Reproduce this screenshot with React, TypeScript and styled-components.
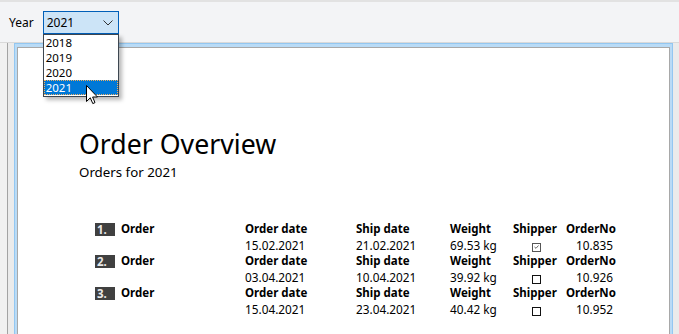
import React from "react";
import styled, { createGlobalStyle } from "styled-components";

const GlobalStyle = createGlobalStyle`
  html, body { margin: 0; padding: 0; }
  body {
    background: #ebebeb;
    font-family: "Noto Sans", "Open Sans", sans-serif;
    color: #000;
    overflow: hidden;
  }
`;

const Screen = styled.div`
  position: relative;
  width: 679px;
  height: 334px;
  overflow: hidden;
  display: flex;
  flex-direction: column;
`;

const Toolbar = styled.div`
  height: 40px;
  flex: none;
  background: #f3f4f6;
  border-top: 2px solid #e2e2e2;
  border-bottom: 1px solid #d9d9d9;
  display: flex;
  align-items: center;
  padding-left: 9px;
  gap: 9px;
  font-size: 12px;
`;

const Label = styled.span`
  font-size: 12px;
`;

const SelectWrap = styled.div`
  position: relative;
  width: 76px;
  height: 23px;
  margin-top: 1px;
`;

const SelectBox = styled.div`
  box-sizing: border-box;
  width: 100%;
  height: 100%;
  background: #cce4f7;
  border: 1px solid #005fb8;
  display: flex;
  align-items: center;
  justify-content: space-between;
  padding: 0 5px 0 3px;
  font-size: 12px;
`;

const List = styled.div`
  position: absolute;
  left: 0;
  top: 23px;
  width: 76px;
  box-sizing: border-box;
  background: #fff;
  border: 1px solid #3d4650;
  box-shadow: 3px 3px 4px rgba(0, 0, 0, 0.28);
  padding: 0 0 1px;
  z-index: 5;
`;

const Item = styled.div<{ $selected?: boolean }>`
  height: 15px;
  line-height: 15px;
  font-size: 11.5px;
  padding-left: 2px;
  box-sizing: border-box;
  overflow: hidden;
  background: ${(p) => (p.$selected ? "#0078d7" : "transparent")};
  color: ${(p) => (p.$selected ? "#fff" : "#000")};
  outline: ${(p) => (p.$selected ? "1px dotted #f0b060" : "none")};
  outline-offset: -1px;
`;

const Workspace = styled.div`
  flex: 1;
  display: flex;
  min-height: 0;
`;

const SideStrip = styled.div`
  width: 7px;
  background: #f1f1f1;
  border-right: 1px solid #a3a3a3;
`;

const FrameArea = styled.div`
  flex: 1;
  padding: 0 6px 0 6px;
  display: flex;
`;

const Frame = styled.div`
  flex: 1;
  border: 1px solid #93c7f1;
  border-bottom: none;
  padding: 3px 2px 0 2px;
  background: #b9dbf6;
  display: flex;
`;

const Page = styled.div`
  flex: 1;
  background: #fff;
  border: 1px solid #a8a8a8;
  border-bottom: none;
  padding: 80px 0 0 61px;
`;

const Title = styled.h1`
  margin: 0;
  font-weight: 400;
  font-size: 26.7px;
  line-height: 32px;
`;

const Subtitle = styled.div`
  font-size: 13.3px;
  line-height: 16px;
  margin-top: 4px;
`;

const Table = styled.div`
  margin: 41px 0 0 16px;
  display: grid;
  grid-template-columns: 26px 124px 111px 94px 63px 53px 47px;
  grid-auto-rows: 16px;
  font-size: 11.5px;
  line-height: 16px;
`;

const Badge = styled.div`
  width: 20px;
  height: 13px;
  margin-top: 2px;
  background: #404040;
  color: #e8e8e8;
  font-weight: 700;
  font-size: 11.5px;
  line-height: 13px;
  padding-left: 2px;
  box-sizing: border-box;
`;

const Head = styled.div<{ $right?: boolean }>`
  font-weight: 700;
  white-space: nowrap;
  text-align: ${(p) => (p.$right ? "right" : "left")};
`;

const Cell = styled.div<{ $right?: boolean; $center?: boolean }>`
  white-space: nowrap;
  font-size: 11.8px;
  text-align: ${(p) => (p.$right ? "right" : p.$center ? "center" : "left")};
  display: ${(p) => (p.$center ? "flex" : "block")};
  justify-content: center;
  align-items: center;
`;

const Box = styled.div<{ $checked?: boolean }>`
  width: 9px;
  height: 9px;
  box-sizing: border-box;
  border: 1px solid ${(p) => (p.$checked ? "#555" : "#111")};
  margin-top: 4px;
  margin-right: 6px;
  display: flex;
  align-items: center;
  justify-content: center;
`;

const Cursor = styled.svg`
  position: absolute;
  left: 86px;
  top: 85px;
  z-index: 10;
`;

const orders = [
  { n: "1.", od: "15.02.2021", sd: "21.02.2021", w: "69.53 kg", s: true, no: "10.835" },
  { n: "2.", od: "03.04.2021", sd: "10.04.2021", w: "39.92 kg", s: false, no: "10.926" },
  { n: "3.", od: "15.04.2021", sd: "23.04.2021", w: "40.42 kg", s: false, no: "10.952" },
];

export default function App() {
  return (
    <>
      <GlobalStyle />
      <Screen>
        <Toolbar>
          <Label>Year</Label>
          <SelectWrap>
            <SelectBox>
              <span>2021</span>
              <svg width="10" height="6" viewBox="0 0 10 6">
                <path d="M0.5 0.5 L5 5 L9.5 0.5" fill="none" stroke="#333" strokeWidth="1" />
              </svg>
            </SelectBox>
            <List>
              <Item>2018</Item>
              <Item>2019</Item>
              <Item>2020</Item>
              <Item $selected>2021</Item>
            </List>
          </SelectWrap>
        </Toolbar>
        <Workspace>
          <SideStrip />
          <FrameArea>
            <Frame>
              <Page>
                <Title>Order Overview</Title>
                <Subtitle>Orders for 2021</Subtitle>
                <Table>
                  {orders.map((o) => (
                    <React.Fragment key={o.n}>
                      <Badge>{o.n}</Badge>
                      <Head>Order</Head>
                      <Head>Order date</Head>
                      <Head>Ship date</Head>
                      <Head>Weight</Head>
                      <Head>Shipper</Head>
                      <Head $right>OrderNo</Head>
                      <Cell />
                      <Cell />
                      <Cell>{o.od}</Cell>
                      <Cell>{o.sd}</Cell>
                      <Cell>{o.w}</Cell>
                      <Cell $center>
                        <Box $checked={o.s}>
                          {o.s && (
                            <svg width="5" height="4" viewBox="0 0 5 4">
                              <path d="M0.5 2 L2 3.3 L4.5 0.5" fill="none" stroke="#555" strokeWidth="0.9" />
                            </svg>
                          )}
                        </Box>
                      </Cell>
                      <Cell $right>{o.no}</Cell>
                    </React.Fragment>
                  ))}
                </Table>
              </Page>
            </Frame>
          </FrameArea>
        </Workspace>
        <Cursor width="13" height="20" viewBox="0 0 13 20">
          <path
            d="M0.5 0.5 L0.5 16.5 L4.3 12.8 L6.8 18.6 L9 17.6 L6.6 12 L11.5 12 Z"
            fill="#fff"
            stroke="#000"
            strokeWidth="1"
            strokeLinejoin="miter"
          />
        </Cursor>
      </Screen>
    </>
  );
}
